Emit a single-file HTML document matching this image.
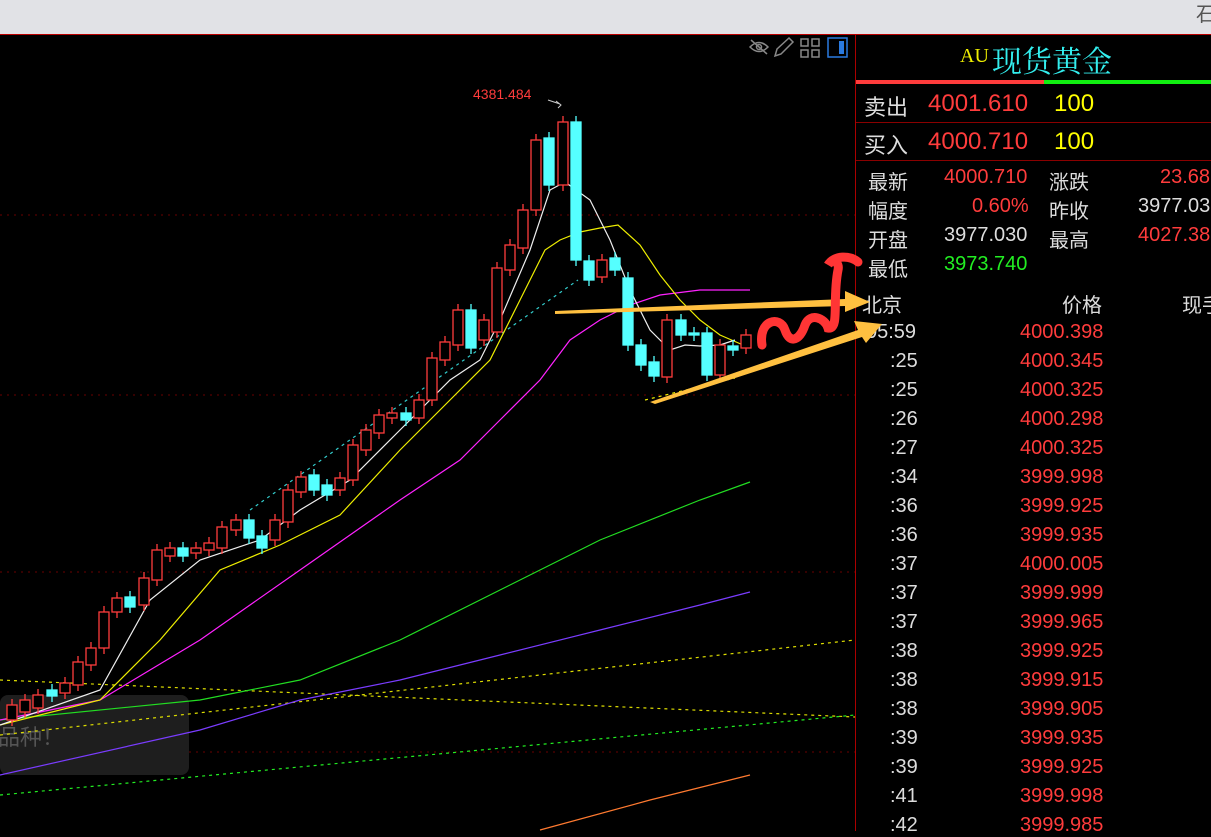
<!DOCTYPE html>
<html><head><meta charset="utf-8"><style>
body{margin:0;width:1211px;height:831px;overflow:hidden;background:#000;font-family:"Liberation Sans","Noto Sans CJK SC",sans-serif;position:relative}
.top{position:absolute;left:0;top:0;width:1211px;height:34px;background:#e1e2e6;border-bottom:1px solid #b00}
.rp{position:absolute;left:855px;top:35px;width:356px;height:796px;border-left:1px solid #a00;background:#000}
.t{position:absolute;white-space:nowrap}
.w{color:#ddd}.r{color:#ff3c3c}.y{color:#ffff00}.g{color:#22ee22}
.hl{position:absolute;left:0;width:356px;height:1px;background:#8a0000}
</style></head><body>
<div class="top"><span style="position:absolute;left:1196px;top:-2px;font-size:20px;color:#555">石</span></div>
<svg style="position:absolute;left:0;top:35px" width="855" height="796" viewBox="0 35 855 796">
<g stroke="#6a0000" stroke-dasharray="2 5" stroke-width="1">
<line x1="0" y1="215" x2="855" y2="215"/><line x1="0" y1="395" x2="855" y2="395"/><line x1="0" y1="572" x2="855" y2="572"/><line x1="0" y1="752" x2="855" y2="752"/></g>
<rect x="0" y="695" width="189" height="80" rx="8" fill="#1e1e1e"/>
<text x="-2" y="745" font-size="22" fill="#555" font-family="Noto Sans CJK SC">品种！</text>
<g fill="none" stroke-width="1.2" stroke-dasharray="3 4">
<line x1="0" y1="735" x2="855" y2="640" stroke="#dd0"/>
<line x1="0" y1="680" x2="855" y2="717" stroke="#dd0"/>
<line x1="0" y1="795" x2="855" y2="715" stroke="#2e2"/>
<line x1="250" y1="510" x2="578" y2="280" stroke="#3cc"/>
<line x1="645" y1="400" x2="735" y2="378" stroke="#ee0"/>
</g>
<g fill="none" stroke-width="1.2">
<polyline stroke="#ff7a30" points="540,830 650,800 750,775"/>
<polyline stroke="#7a3cff" points="0,775 200,730 300,700 400,680 500,655 600,630 700,605 750,592"/>
<polyline stroke="#22dd22" points="0,720 200,700 300,680 400,640 500,590 600,540 700,500 750,482"/>
<polyline stroke="#ff22ff" points="0,720 100,700 200,640 300,570 400,500 460,460 500,420 540,380 570,340 600,320 630,305 660,295 700,290 750,290"/>
<polyline stroke="#eeee00" points="0,725 100,700 160,640 220,570 280,545 340,515 400,450 450,400 490,360 520,300 545,250 560,240 580,232 600,228 618,225 640,245 660,275 680,300 700,320 720,335 750,348"/>
<polyline stroke="#eee" points="0,725 100,690 150,600 200,560 260,540 300,510 350,480 400,430 450,380 480,360 500,320 530,250 550,190 565,182 590,200 610,240 630,290 650,330 670,350 685,345 700,346 720,345 735,340"/>
</g>
<g id="c" stroke-width="1.3"></g>
<text x="473" y="99" font-size="14" fill="#ff3c3c">4381.484</text>
<path d="M548,100 L560,104 M556,101 L561,105 L558,108" stroke="#ccc" fill="none"/>
<g stroke="#888" fill="none" stroke-width="1.5">
<path d="M750,47 Q759,38 768,47 Q759,56 750,47Z"/><circle cx="759" cy="47" r="2.5"/><line x1="751" y1="40" x2="767" y2="54"/>
<path d="M775,56 L777,49 L789,38 L793,42 L781,54Z"/>
<rect x="801" y="39" width="7" height="7"/><rect x="812" y="39" width="7" height="7"/><rect x="801" y="50" width="7" height="7"/><rect x="812" y="50" width="7" height="7"/>
</g>
<rect x="828" y="38" width="19" height="19" fill="none" stroke="#2a7ae0" stroke-width="1.5"/><rect x="839" y="41" width="5" height="13" fill="#2a7ae0"/>
</svg>
<div class="rp">
<div class="t" style="left:104px;top:10px;font-size:20px;color:#ee0;font-family:'Liberation Serif',serif">AU</div>
<div class="t" style="left:136px;top:2px;font-size:30px;color:#33eeee;font-family:'Noto Serif CJK SC',serif">现货黄金</div>
<div style="position:absolute;left:0;top:45px;width:188px;height:4px;background:#ff3c3c"></div>
<div style="position:absolute;left:188px;top:45px;width:168px;height:4px;background:#11ee11"></div>
<div class="t w" style="left:8px;top:55px;font-size:22px">卖出</div><div class="t r" style="left:72px;top:55px;font-size:24px">4001.610</div><div class="t y" style="left:198px;top:55px;font-size:24px">100</div>
<div class="hl" style="top:87px"></div>
<div class="t w" style="left:8px;top:93px;font-size:22px">买入</div><div class="t r" style="left:72px;top:93px;font-size:24px">4000.710</div><div class="t y" style="left:198px;top:93px;font-size:24px">100</div>
<div class="hl" style="top:125px"></div>
<div style="font-size:20px">
<div class="t w" style="left:12px;top:131px">最新</div><div class="t r" style="left:88px;top:131px">4000.710</div><div class="t w" style="left:193px;top:131px">涨跌</div><div class="t r" style="left:304px;top:131px">23.68</div>
<div class="t w" style="left:12px;top:160px">幅度</div><div class="t r" style="left:116px;top:160px">0.60%</div><div class="t w" style="left:193px;top:160px">昨收</div><div class="t w" style="left:282px;top:160px">3977.03</div>
<div class="t w" style="left:12px;top:189px">开盘</div><div class="t w" style="left:88px;top:189px">3977.030</div><div class="t w" style="left:193px;top:189px">最高</div><div class="t r" style="left:282px;top:189px">4027.38</div>
<div class="t w" style="left:12px;top:218px">最低</div><div class="t g" style="left:88px;top:218px">3973.740</div>
<div class="t w" style="left:6px;top:254px">北京</div><div class="t w" style="left:206px;top:254px">价格</div><div class="t w" style="left:326px;top:254px">现手</div>
</div>
<div id="rows" style="font-size:20px"></div>
</div>
<svg style="position:absolute;left:0;top:0" width="1211" height="831">
<g fill="#ffc040">
<polygon points="555,311 845,299 845,291 870,302 845,312 845,306 555,314"/>
<polygon points="650,402 858,330 854,321 882,324 866,343 862,337 655,404"/>
</g>
<path d="M762,345 C758,320 780,315 785,330 C790,345 800,340 805,325 C810,312 825,318 828,328 C840,330 832,300 838,270 C840,262 832,258 828,265 C834,255 850,255 858,262" stroke="#ff3535" stroke-width="9" fill="none" stroke-linecap="round"/>
</svg>
<script>
var d=[[12,'r',705,720],[25,'r',700,712],[38,'r',695,708],[52,'c',690,696],[65,'r',683,693],[78,'r',662,685],[91,'r',648,665],[104,'r',612,648],[117,'r',598,612],[130,'c',597,607],[144,'r',578,605],[157,'r',550,580],[170,'r',548,556],[183,'c',548,556],[196,'r',548,553],[209,'r',543,550],[222,'r',527,548],[236,'r',520,530],[249,'c',520,538],[262,'c',536,548],[275,'r',520,540],[288,'r',490,522],[301,'r',477,492],[314,'c',475,490],[327,'c',485,495],[340,'r',478,490],[353,'r',445,480],[366,'r',430,450],[379,'r',415,433],[392,'r',413,418],[406,'c',413,420],[419,'r',400,418],[432,'r',358,400],[445,'r',342,360],[458,'r',310,345],[471,'c',310,348],[484,'r',320,340],[497,'r',268,332],[510,'r',245,270],[523,'r',210,248],[536,'r',140,210],[549,'c',138,185],[563,'r',122,185],[576,'c',122,260],[589,'c',261,280],[602,'r',260,277],[615,'c',258,270],[628,'c',278,345],[641,'c',345,365],[654,'c',362,376],[667,'r',320,377],[681,'c',320,335],[694,'c',333,335],[707,'c',333,375],[720,'r',345,375],[733,'c',346,350],[746,'r',335,348]];
var s='';d.forEach(function(a){var x=a[0],col=a[1]=='r'?'#ff3c3c':'#55ffff',t=a[2],b=a[3];
s+='<line x1="'+x+'" y1="'+(t-6)+'" x2="'+x+'" y2="'+(b+6)+'" stroke="'+col+'"/>';
s+='<rect x="'+(x-5)+'" y="'+t+'" width="10" height="'+Math.max(b-t,2)+'" fill="'+(a[1]=='r'?'#000':col)+'" stroke="'+col+'"/>';});
document.getElementById('c').innerHTML=s;
var tm=['05:59',':25',':25',':26',':27',':34',':36',':36',':37',':37',':37',':38',':38',':38',':39',':39',':41',':42'];
var pr=['4000.398','4000.345','4000.325','4000.298','4000.325','3999.998','3999.925','3999.935','4000.005','3999.999','3999.965','3999.925','3999.915','3999.905','3999.935','3999.925','3999.998','3999.985'];
var h='';for(var i=0;i<tm.length;i++){var y=286+i*29;h+='<div class="t w" style="left:'+(i==0?10:34)+'px;top:'+y+'px">'+tm[i]+'</div><div class="t r" style="left:164px;top:'+y+'px">'+pr[i]+'</div>';}
document.getElementById('rows').innerHTML=h;
</script>
</body></html>
